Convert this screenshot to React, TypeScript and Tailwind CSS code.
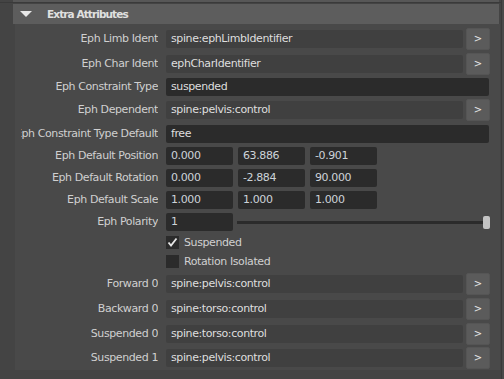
const Label = ({ text }: { text: string }) => (
    <div className="ml-[6px] w-[137px] h-[16px] flex items-center justify-end overflow-hidden">
        <span className="shrink-0 whitespace-nowrap text-[#d0d0d0]">{text}</span>
    </div>
);

const Arrow = () => (
    <div className="ml-[3px] w-[24px] h-[22px] rounded-[2px] bg-[#5b5b5b] border border-[#555] flex items-center justify-center text-[10px] tracking-normal text-[#e4e4e4]">
        &gt;
    </div>
);

const LinkRow = ({ label, value, h = "h-[25px]" }: { label: string; value: string; h?: string }) => (
    <div className={`flex items-center ${h}`}>
        <Label text={label} />
        <div className="ml-[8px] w-[297px] h-[18px] rounded-[2px] bg-[#404040] flex items-center pl-[5px] text-[#dedede]">
            {value}
        </div>
        <Arrow />
    </div>
);

const DarkRow = ({ label, value, h }: { label: string; value: string; h: string }) => (
    <div className={`flex items-center ${h}`}>
        <Label text={label} />
        <div className="ml-[8px] w-[323px] h-[18px] rounded-[2px] bg-[#2b2b2b] flex items-center pl-[5px] text-[#dedede]">
            {value}
        </div>
    </div>
);

const NumRow = ({ label, values }: { label: string; values: string[] }) => (
    <div className="flex items-center h-[22px]">
        <Label text={label} />
        <div className="ml-[8px] flex gap-[5px]">
            {values.map((v, i) => (
                <div key={i} className="w-[67px] h-[18px] rounded-[2px] bg-[#2b2b2b] flex items-center pl-[5px] text-[#cdd3d9]">
                    {v}
                </div>
            ))}
        </div>
    </div>
);

const Check = ({ label, checked }: { label: string; checked?: boolean }) => (
    <div className="flex items-center h-[19px]">
        <div className="ml-[151px] w-[13px] h-[13px] bg-[#2b2b2b] flex items-center justify-center">
            {checked && (
                <svg width="11" height="11" viewBox="0 0 11 11">
                    <path d="M1.5 5.5 L4 8.5 L9.5 1.5" stroke="#e6e6e6" strokeWidth="1.8" fill="none" />
                </svg>
            )}
        </div>
        <span className="ml-[5px] text-[#d0d0d0]">{label}</span>
    </div>
);

export default function App() {
    return (
        <div className="w-[504px] h-[379px] bg-[#444444] overflow-hidden flex font-['DejaVu_Sans',sans-serif] text-[11px] tracking-[-0.4px] leading-[14px]">
            <div className="w-[501px] flex flex-col">
                <div className="ml-[13px] w-[486px] h-[2px] bg-[#575757]" />
                <div className="h-[1px] bg-[#3a3a3a]" />
                <div className="h-[1px]" />
                <div className="ml-[13px] w-[486px] h-[20px] bg-[#5d5d5d] flex items-center">
                    <svg width="12" height="7" viewBox="0 0 12 7" className="ml-[7px]">
                        <path d="M0 0 L12 0 L6 6 Z" fill="#e8e8e8" />
                    </svg>
                    <span className="ml-[15px] font-bold text-[10.5px] tracking-[-0.9px] text-[#e0e0e0]">Extra Attributes</span>
                </div>
                <div className="ml-[15px] w-[485px] bg-[#494949] pt-[2px] h-[346px]">
                    <LinkRow label="Eph Limb Ident" value="spine:ephLimbIdentifier" />
                    <LinkRow label="Eph Char Ident" value="ephCharIdentifier" />
                    <DarkRow label="Eph Constraint Type" value="suspended" h="h-[22px]" />
                    <LinkRow label="Eph Dependent" value="spine:pelvis:control" h="h-[24px]" />
                    <DarkRow label="Eph Constraint Type Default" value="free" h="h-[23px]" />
                    <NumRow label="Eph Default Position" values={["0.000", "63.886", "-0.901"]} />
                    <NumRow label="Eph Default Rotation" values={["0.000", "-2.884", "90.000"]} />
                    <NumRow label="Eph Default Scale" values={["1.000", "1.000", "1.000"]} />
                    <div className="flex items-center h-[22px]">
                        <Label text="Eph Polarity" />
                        <div className="ml-[8px] w-[67px] h-[18px] rounded-[2px] bg-[#2b2b2b] flex items-center pl-[5px] text-[#cdd3d9]">
                            1
                        </div>
                        <div className="ml-[4px] w-[253px] flex items-center">
                            <div className="flex-1 h-[3px] bg-[#2b2b2b]" />
                            <div className="w-[7px] h-[13px] rounded-[2px] bg-[#c4c4c4]" />
                        </div>
                    </div>
                    <Check label="Suspended" checked />
                    <Check label="Rotation Isolated" />
                    <LinkRow label="Forward 0" value="spine:pelvis:control" />
                    <LinkRow label="Backward 0" value="spine:torso:control" />
                    <LinkRow label="Suspended 0" value="spine:torso:control" />
                    <LinkRow label="Suspended 1" value="spine:pelvis:control" h="h-[24px]" />
                </div>
            </div>
            <div className="w-[1px] bg-[#3a3a3a]" />
            <div className="flex-1 bg-[#4a4a4a]" />
        </div>
    );
}
